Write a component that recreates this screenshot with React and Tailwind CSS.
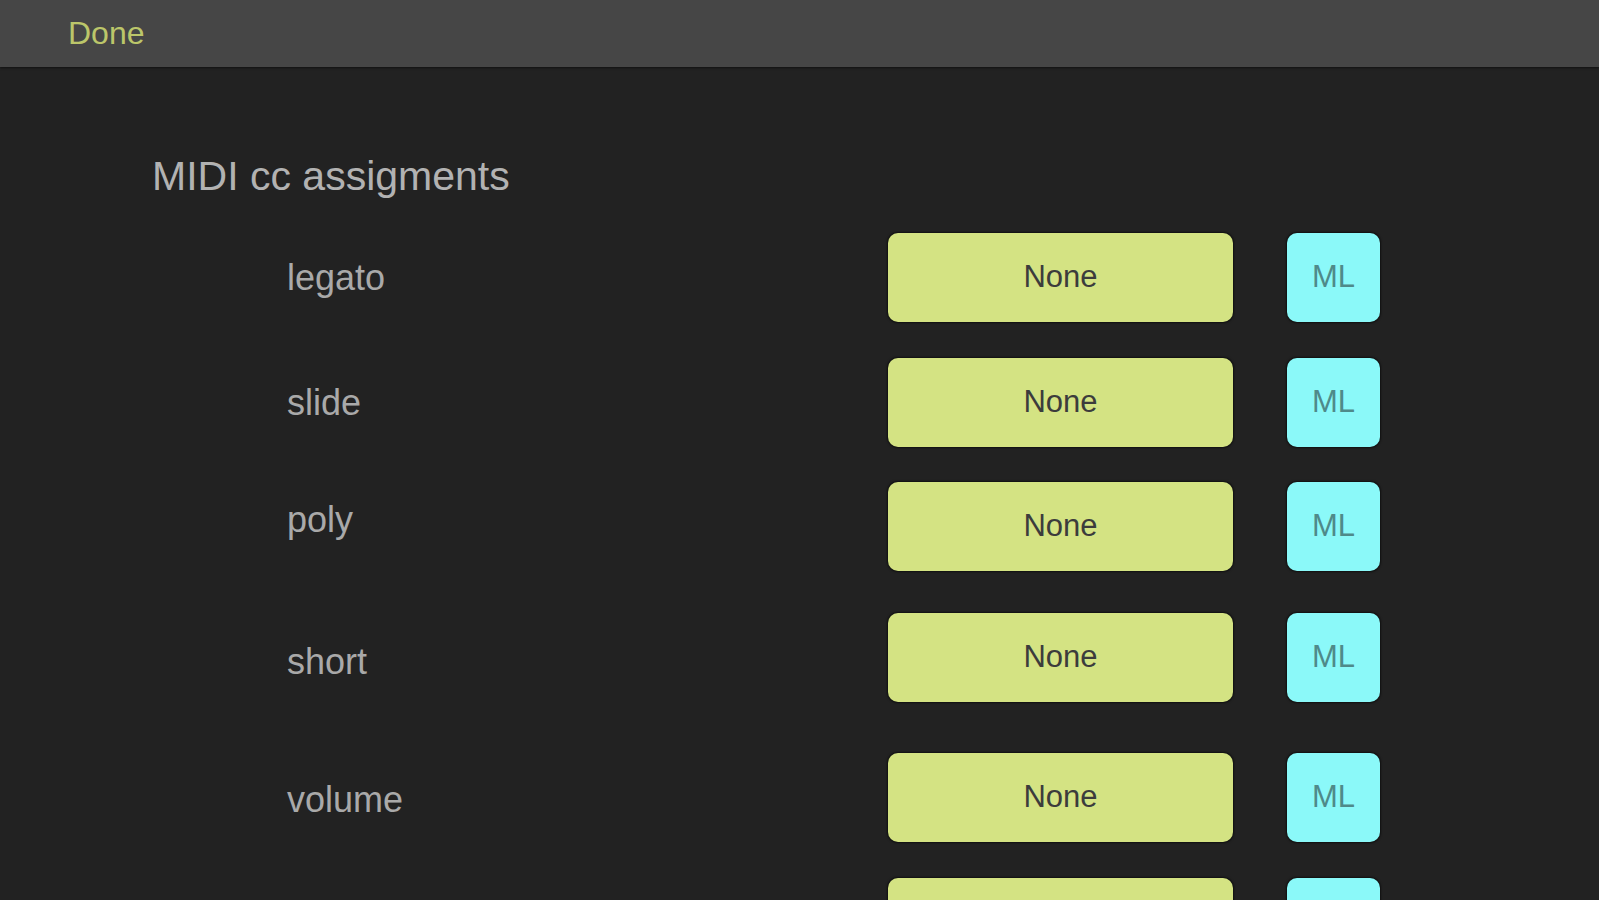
import React from "react";

const rows = [
  { label: "legato", mt: "mt-0", shift: "mt-[1px]", text: true },
  { label: "slide", mt: "mt-[36px]", shift: "", text: true },
  { label: "poly", mt: "mt-[35px]", shift: "mb-[14px]", text: true },
  { label: "short", mt: "mt-[42px]", shift: "mt-[8px]", text: true },
  { label: "volume", mt: "mt-[51px]", shift: "mt-[5px]", text: true },
  { label: "", mt: "mt-[36px]", shift: "", text: false },
];

export default function App() {
  return (
    <div
      className="h-screen w-full overflow-hidden bg-[#222222] flex flex-col"
      style={{ fontFamily: '"Liberation Sans", Arial, sans-serif' }}
    >
      <header className="h-[67px] flex-none bg-[#464646] flex items-center pl-[68px] shadow-[0_1px_2px_rgba(0,0,0,0.5)] relative z-10">
        <span className="text-[32px] leading-none text-[#bcc66a] pb-[1px]">Done</span>
      </header>
      <main className="flex flex-col">
        <h1 className="mt-[85px] pl-[152px] text-[41px] leading-[48px] text-[#b2b2b2] font-normal">
          MIDI cc assigments
        </h1>
        <div className="mt-[33px] pl-[287px] flex flex-col">
          {rows.map((r, i) => (
            <div key={i} className={`flex items-center h-[89px] flex-none ${r.mt}`}>
              <div
                className={`w-[601px] flex-none text-[36px] leading-[40px] text-[#a9a9a9] ${r.shift}`}
              >
                {r.label}
              </div>
              <div className="w-[345px] h-[89px] flex-none rounded-[10px] bg-[#d4e383] shadow-[0_0_2px_1px_rgba(0,0,0,0.55)] flex items-center justify-center text-[31px] text-[#3c3c3c]">
                {r.text ? "None" : null}
              </div>
              <div className="ml-[54px] w-[93px] h-[89px] flex-none rounded-[10px] bg-[#8bf9f9] shadow-[0_0_2px_1px_rgba(0,0,0,0.55)] flex items-center justify-center text-[31px] text-[#4f8a8a]">
                {r.text ? "ML" : null}
              </div>
            </div>
          ))}
        </div>
      </main>
    </div>
  );
}
